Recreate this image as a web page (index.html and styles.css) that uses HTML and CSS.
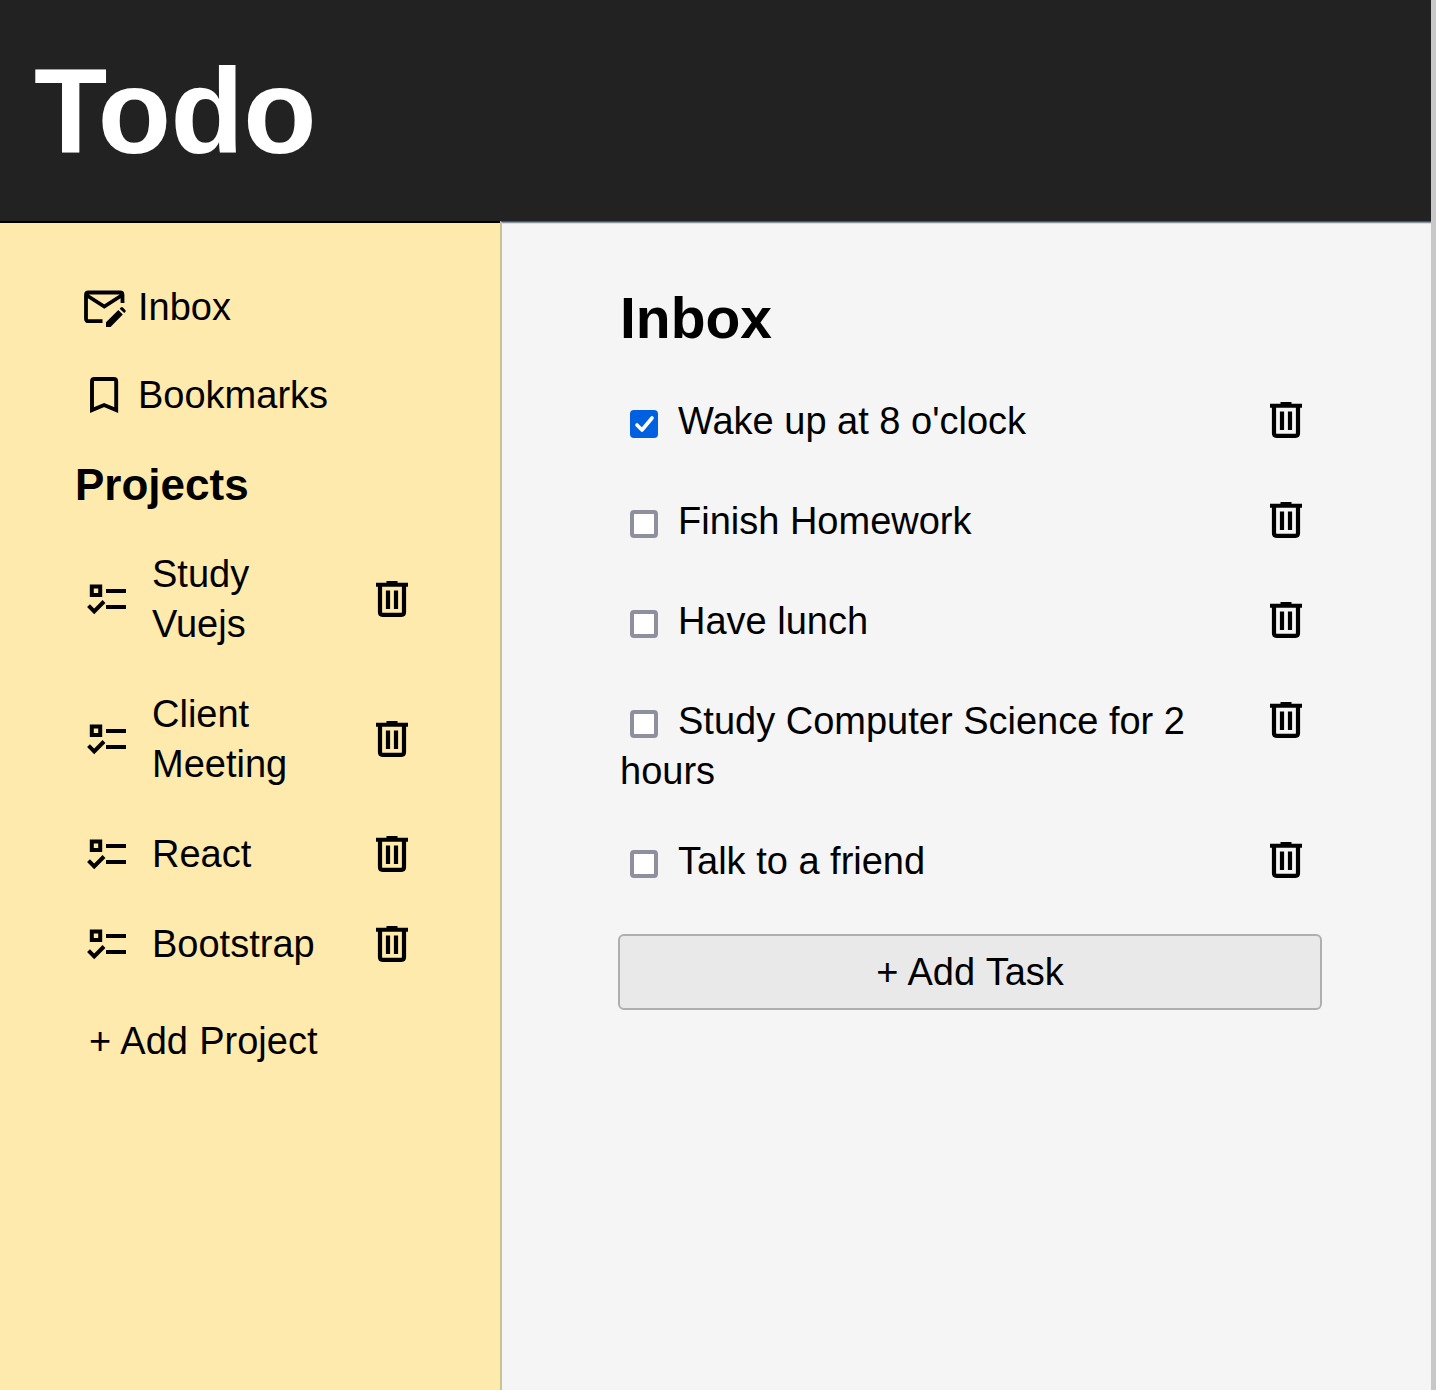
FILE: index.html
```html
<!DOCTYPE html>
<html lang="en">
<head>
<meta charset="utf-8">
<title>Todo</title>
<link rel="stylesheet" href="styles.css">
</head>
<body>
<svg class="defs" width="0" height="0">
  <symbol id="trash" viewBox="0 0 32 36"><path d="M0 3.800H32M10.500 2H21.500" fill="none" stroke="currentColor" stroke-width="4"/><path d="M4 4V31.300Q4 33.800 6.500 33.800H25.500Q28 33.800 28 31.300V4M12 9.500V28M20 9.500V28" fill="none" stroke="currentColor" stroke-width="4.200"/></symbol>
  <symbol id="list" viewBox="0 0 40 32"><path d="M4.800 3.500H13.200V11.900H4.800ZM19 8H39M19 24H39M1.500 22.700L7.200 28.500L17 18.500" fill="none" stroke="currentColor" stroke-width="4"/></symbol>
</svg>
<header class="header"><h1 class="title">Todo</h1></header>
<div class="layout">
  <aside class="sidebar">
    <div class="nav"><svg class="nav-icon" viewBox="0 0 42 42"><path d="M18.500 35.200H4.500Q2 35.200 2 32.700V9Q2 6.500 4.500 6.500H36Q38.500 6.500 38.500 9V17M3 9.500L20.300 20.500L37.500 9.500" fill="none" stroke="currentColor" stroke-width="3.800"/><path d="M22 41V36.300L34.300 24L38.800 28.500L26.500 41ZM35.700 22.700L36.800 21.600Q37.800 20.600 38.900 21.600L41.300 24Q42.300 25 41.300 26L40.200 27.100Z" fill="currentColor"/></svg><span>Inbox</span></div>
    <div class="nav"><svg class="nav-icon" viewBox="0 0 42 42"><path d="M8 36V7.500Q8 5 10.500 5H29.700Q32.200 5 32.200 7.500V36L20.100 31Z" fill="none" stroke="currentColor" stroke-width="3.900"/></svg><span>Bookmarks</span></div>
    <h3 class="projects-title">Projects</h3>
    <div class="projects">
      <div class="project"><svg class="list"><use href="#list"/></svg><span class="name">Study Vuejs</span><svg class="trash"><use href="#trash"/></svg></div>
      <div class="project"><svg class="list"><use href="#list"/></svg><span class="name">Client Meeting</span><svg class="trash"><use href="#trash"/></svg></div>
      <div class="project"><svg class="list"><use href="#list"/></svg><span class="name">React</span><svg class="trash"><use href="#trash"/></svg></div>
      <div class="project"><svg class="list"><use href="#list"/></svg><span class="name">Bootstrap</span><svg class="trash"><use href="#trash"/></svg></div>
    </div>
    <div class="add-project">+ Add Project</div>
  </aside>
  <main class="main">
    <h2 class="heading">Inbox</h2>
    <div class="tasks">
      <div class="task"><div class="label"><span class="box checked"><svg viewBox="0 0 28 28"><path d="M7 15L12 20L22 8" fill="none" stroke="#fff" stroke-width="3.600" stroke-linecap="round" stroke-linejoin="round"/></svg></span>Wake up at 8 o'clock</div><svg class="trash"><use href="#trash"/></svg></div>
      <div class="task"><div class="label"><span class="box"></span>Finish Homework</div><svg class="trash"><use href="#trash"/></svg></div>
      <div class="task"><div class="label"><span class="box"></span>Have lunch</div><svg class="trash"><use href="#trash"/></svg></div>
      <div class="task"><div class="label"><span class="box"></span>Study Computer Science for 2 hours</div><svg class="trash"><use href="#trash"/></svg></div>
      <div class="task"><div class="label"><span class="box"></span>Talk to a friend</div><svg class="trash"><use href="#trash"/></svg></div>
    </div>
    <button class="add-task">+ Add Task</button>
  </main>
</div>
</body>
</html>
```
FILE: styles.css
```css
* { box-sizing: border-box; }
body {
  margin: 0;
  height: 1390px;
  overflow: hidden;
  display: flex;
  flex-direction: column;
  border-right: 5px solid #c8c8c8;
  font: 38px/50px "Liberation Sans", Arial, sans-serif;
  color: #000;
}
.defs { display: none; }
svg { display: block; flex: none; }
.header {
  height: 221px;
  flex: none;
  display: flex;
  align-items: center;
  padding-left: 34px;
  background: #222;
  color: #fff;
}
.title { margin: 0; font-size: 120px; line-height: 140px; letter-spacing: -0.6px; }
.layout { flex: 1; display: flex; }
.sidebar {
  width: 500px;
  padding: 59px 92px 0 75px;
  background: #ffeaad;
  border-top: 2px solid #000;
}
.nav {
  display: flex;
  align-items: center;
  gap: 12px;
  height: 50px;
  margin-bottom: 38px;
  padding-left: 9px;
}
.nav-icon { width: 42px; height: 42px; overflow: visible; }
.projects-title { margin: 0 0 39px; padding-top: 2px; font-size: 44px; line-height: 50px; }
.projects { display: flex; flex-direction: column; gap: 40px; }
.project { display: flex; align-items: center; padding-left: 12px; }
.list { width: 40px; height: 32px; }
.name { flex: 1; margin: 0 48px 0 25px; padding-right: 20px; }
.project:last-child .name { padding-right: 0; }
.trash { width: 32px; height: 36px; }
.add-project { margin-top: 47px; padding-left: 14px; word-spacing: 0.7px; }
.main {
  flex: 1;
  padding: 63px 109px 0 116px;
  background: #f5f5f5;
  border-left: 2px solid #c5c495;
  border-top: 1px solid #46546f;
  box-shadow: inset 0 1px #8894a4, inset 0 2px #d8dbe0;
}
.heading { margin: 0 0 45px 2px; font-size: 57px; line-height: 66px; }
.tasks { display: flex; flex-direction: column; gap: 40px; }
.task {
  display: flex;
  justify-content: space-between;
  min-height: 60px;
  padding: 0 20px 0 2px;
}
.label { width: 590px; }
.task .trash { margin-top: 6px; }
.box {
  display: inline-block;
  width: 28px;
  height: 28px;
  margin: 0 20px 0 10px;
  vertical-align: -4px;
  border: 4px solid #8f8f9d;
  border-radius: 4px;
  background: #fff;
}
.checked { border: 0; background: #0060df; }
.add-task {
  display: block;
  width: 704px;
  height: 76px;
  margin-top: 38px;
  border: 2px solid #afafaf;
  border-radius: 6px;
  background: #e9e9e9;
  font: inherit;
  word-spacing: 0.7px;
  color: #000;
}
```
